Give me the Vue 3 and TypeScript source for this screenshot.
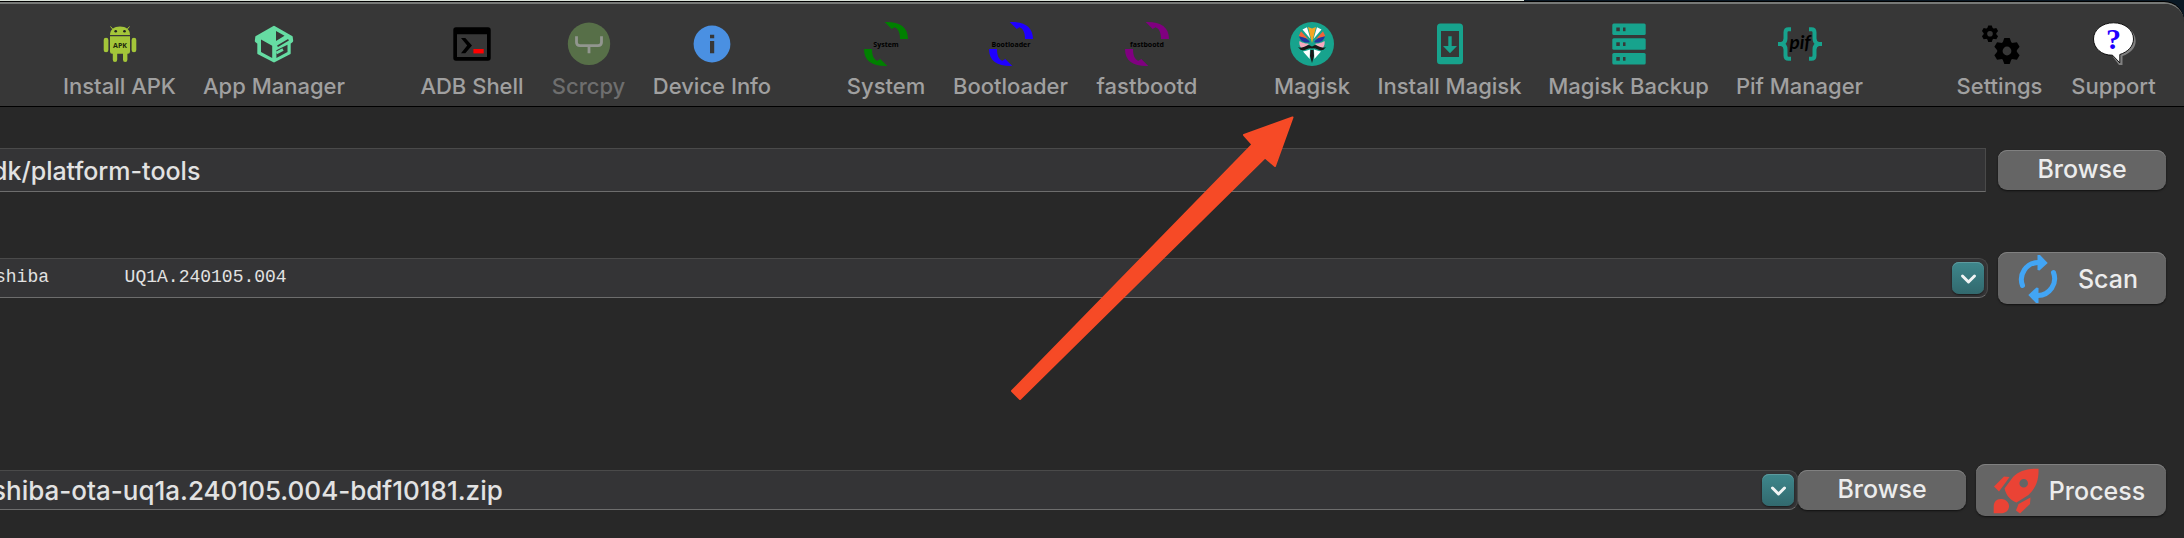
<script setup lang="ts">
import { ref } from 'vue'

interface Tool {
  id: string
  label: string
  disabled?: boolean
}

const groups: Tool[][] = [
  [
    { id: 'apk', label: 'Install APK' },
    { id: 'apps', label: 'App Manager' },
  ],
  [
    { id: 'shell', label: 'ADB Shell' },
    { id: 'scrcpy', label: 'Scrcpy', disabled: true },
    { id: 'info', label: 'Device Info' },
  ],
  [
    { id: 'system', label: 'System' },
    { id: 'bootloader', label: 'Bootloader' },
    { id: 'fastbootd', label: 'fastbootd' },
  ],
  [
    { id: 'magisk', label: 'Magisk' },
    { id: 'install-magisk', label: 'Install Magisk' },
    { id: 'backup', label: 'Magisk Backup' },
    { id: 'pif', label: 'Pif Manager' },
  ],
  [
    { id: 'settings', label: 'Settings' },
    { id: 'support', label: 'Support' },
  ],
]

const rebootColors: Record<string, string> = {
  system: '#008000',
  bootloader: '#1f00ff',
  fastbootd: '#800080',
}

const toolsPath = ref('dk/platform-tools')
const devices = ['shiba\u00a0\u00a0\u00a0\u00a0\u00a0\u00a0\u00a0UQ1A.240105.004']
const device = ref(devices[0])
const firmwares = ['shiba-ota-uq1a.240105.004-bdf10181.zip']
const firmware = ref(firmwares[0])
</script>

<template>
  <div class="desktop">
    <div class="window">
      <nav class="toolbar" aria-label="Tools">
        <template v-for="(group, g) in groups" :key="g">
          <span class="spacer"></span>
          <button v-for="tool in group" :key="tool.id" type="button" class="tool" :disabled="tool.disabled">
            <svg class="tool-icon" viewBox="0 0 44 44" aria-hidden="true">
              <g v-if="tool.id === 'apk'" fill="#a4c639">
                <path d="M12 13C12 7.5 16 4.5 22 4.5S32 7.5 32 13Z" />
                <path d="M12.5 4.5L15.5 8M31.5 4.5L28.5 8" stroke="#a4c639" stroke-width="1" />
                <path d="M12 14.3H32V29.5Q32 31.7 30 31.7H29.4V37.8A2.2 2.2 0 0 1 25 37.8V31.7H19.2V37.8A2.2 2.2 0 0 1 14.8 37.8V31.7H14Q12 31.7 12 29.5Z" />
                <rect x="5.7" y="15.7" width="4.7" height="14.6" rx="2.3" />
                <rect x="33.6" y="15.7" width="4.7" height="14.6" rx="2.3" />
                <circle cx="17.7" cy="9.3" r="1.3" fill="#222" />
                <circle cx="26.5" cy="9.3" r="1.3" fill="#222" />
                <text x="22" y="26.4" class="mini" font-size="7" fill="#20260c">APK</text>
              </g>
              <g v-else-if="tool.id === 'apps'" stroke-linejoin="round">
                <path d="M22 5L39.5 15L40 19L37.5 21V31.2L22 39.2L6.5 31.2V21L4 19L4.5 15Z" fill="#66dca3" stroke="#66dca3" stroke-width="2.4" />
                <path d="M9 17.5L20.2 23.8V36L9 30Z M24 9L32.5 13.8L24 19Z M24.4 28.3L35.5 22.8V30L24.4 36Z" fill="#373737" />
                <path d="M25.5 24.3L36.5 17.8" stroke="#373737" stroke-width="1.6" />
                <path d="M24.4 31L31 27.5" stroke="#66dca3" stroke-width="2.6" />
              </g>
              <g v-else-if="tool.id === 'shell'">
                <path fill-rule="evenodd" d="M6 5.3H38Q40.7 5.3 40.7 8V36Q40.7 38.7 38 38.7H6Q3.3 38.7 3.3 36V8Q3.3 5.3 6 5.3ZM7 12.3V35H37V12.3Z" />
                <path d="M11 16H15.3L22 23.6L15.3 31.2H11L17.2 23.6Z" />
                <rect x="23.4" y="27" width="10.3" height="4.4" fill="#f00" />
              </g>
              <g v-else-if="tool.id === 'scrcpy'">
                <circle cx="22" cy="21.8" r="21.2" fill="#576f48" />
                <path d="M9.5 14.3V20.2Q9.5 23.6 13 23.6H31Q34.5 23.6 34.5 20.2V14.3M22 23.6V31.3" fill="none" stroke="#92968f" stroke-width="2.8" />
              </g>
              <g v-else-if="tool.id === 'info'">
                <circle cx="22" cy="22" r="18.4" fill="#4a90e2" />
                <path d="M20 12.7H24.2V16.3H20ZM20 19H24.2V31.3H20Z" fill="#373737" />
              </g>
              <g v-else-if="rebootColors[tool.id]" :fill="rebootColors[tool.id]">
                <path d="M20.7 0C35-.5 44 4.5 44 17H36C36 11 34.5 6.5 30.5 5.2L27.7 7Z" />
                <path d="M20.7 0C35-.5 44 4.5 44 17H36C36 11 34.5 6.5 30.5 5.2L27.7 7Z" transform="rotate(180 22 22)" />
                <text x="22" y="24.5" class="mini" font-size="7" fill="#000">{{ tool.label }}</text>
              </g>
              <g v-else-if="tool.id === 'magisk'">
                <circle cx="22" cy="22" r="22" fill="#17a38d" />
                <g v-for="flip in [false, true]" :key="String(flip)" :transform="flip ? 'translate(44 0) scale(-1 1)' : undefined">
                  <path d="M18 5L22 6.5V21L20.5 15Z" fill="#f5a623" />
                  <path d="M12.5 7.5L17 5.2L20.5 17Z" fill="#fff" />
                  <path d="M9 13.5L11 9.3L18 17L9.5 14.5Z" fill="#f4623a" />
                  <path d="M9 14.5C14 15 18.5 17 19.8 20.3C15 21 11 20 9 14.5Z" fill="#20349c" />
                  <path d="M9.5 19C13 21.5 17 21.3 19 22L16 24.5L11.5 26.2C9.5 24 9 21.5 9.5 19Z" fill="#f7a8be" />
                  <path d="M8 25C12 27.5 16 23 19 23L22 24.5V26.5C18 25 15 29.5 10.5 27.8Z" fill="#171717" />
                  <path d="M13 29.5C16 29 18 28 20 27.5L19.7 37Z" fill="#fff" />
                  <path d="M22 28L20.5 28L20 34L22 41Z" fill="#171717" />
                </g>
              </g>
              <g v-else-if="tool.id === 'install-magisk'" fill="#17a38d">
                <path fill-rule="evenodd" d="M12.5 1.5H31.5Q35 1.5 35 5V39Q35 42.3 31.5 42.3H12.5Q9 42.3 9 39V5Q9 1.5 12.5 1.5ZM13 9V35H31V9Z" />
                <path d="M20.3 14.3H23.7V24H29L22 31.2L15 24H20.3Z" />
              </g>
              <g v-else-if="tool.id === 'backup'">
                <g v-for="y in [1.5, 16.3, 31]" :key="y">
                  <rect x="5.3" :y="y" width="33.4" height="11.4" rx="1.5" fill="#17a38d" />
                  <rect x="9.3" :y="y + 4" width="3.5" height="3.7" fill="#373737" />
                  <rect x="16" :y="y + 4" width="2.5" height="3.7" fill="#373737" />
                </g>
              </g>
              <g v-else-if="tool.id === 'pif'">
                <path d="M13 7.2H10.5Q7.5 7.2 7.5 10.5V16.5Q7.5 21 3.5 22H0H3.5Q7.5 23 7.5 27.5V33.5Q7.5 36.8 10.5 36.8H13M31 7.2H33.5Q36.5 7.2 36.5 10.5V16.5Q36.5 21 40.5 22H44H40.5Q36.5 23 36.5 27.5V33.5Q36.5 36.8 33.5 36.8H31" fill="none" stroke="#17a38d" stroke-width="4" />
                <text x="22" y="27" class="pif" font-size="19">pif</text>
              </g>
              <g v-else-if="tool.id === 'settings'">
                <g v-for="gear in ['translate(12 11.7) scale(.64)', 'translate(29 29)']" :key="gear" :transform="gear">
                  <circle r="9.7" />
                  <path v-for="a in [0, 60, 120]" :key="a" d="M-2.7-13H2.7L4.5-8V8L2.7 13H-2.7L-4.5 8V-8Z" :transform="`rotate(${a})`" />
                  <circle r="4.4" fill="#373737" />
                </g>
              </g>
              <g v-else>
                <path d="M23.5 2.5C35 2.5 43.7 9.5 43.7 19C43.7 26 38 31.5 30.5 34V43H27L21 35Z" fill="#808080" />
                <path d="M21.5 .8C33 .8 41.5 8 41.5 17C41.5 24 36 30 27.8 32.5V40.8L20.5 33.2C9.5 33.5 1.5 26 1.5 17C1.5 8 10 .8 21.5 .8Z" fill="#fff" stroke="#000" stroke-width=".9" />
                <text x="21.5" y="27" class="question" font-size="30" fill="#1f00ff">?</text>
              </g>
            </svg>
            <span class="tool-label">{{ tool.label }}</span>
          </button>
        </template>
      </nav>

      <main class="content">
        <div class="row">
          <input v-model="toolsPath" class="field path" type="text" aria-label="Platform tools path" />
          <button type="button" class="push">Browse</button>
        </div>

        <div class="row">
          <div class="combo">
            <select v-model="device" class="field mono" aria-label="Device">
              <option v-for="d in devices" :key="d" :value="d">{{ d }}</option>
            </select>
            <span class="chevron">
              <svg viewBox="0 0 32 32" aria-hidden="true"><path d="M10.5 14L16.5 20L22.5 14" /></svg>
            </span>
          </div>
          <button type="button" class="push tall scan">
            <svg class="scan-icon" viewBox="0 0 40 50" aria-hidden="true">
              <path d="M4.5 31.5A17 17 0 0 1 20 8.5M35.5 18.5A17 17 0 0 1 20 41.5" fill="none" stroke="#42a5f5" stroke-width="5" stroke-linecap="round" />
              <path d="M19.5 1H22L29.7 9L21.5 16.5L19.5 16ZM20.5 49H18L10.3 41L18.5 33.5L20.5 34Z" fill="#42a5f5" />
            </svg>
            <span>Scan</span>
          </button>
        </div>

        <div class="row firmware">
          <div class="combo flush">
            <select v-model="firmware" class="field package" aria-label="Firmware package">
              <option v-for="f in firmwares" :key="f" :value="f">{{ f }}</option>
            </select>
            <span class="chevron">
              <svg viewBox="0 0 32 32" aria-hidden="true"><path d="M10.5 14L16.5 20L22.5 14" /></svg>
            </span>
          </div>
          <button type="button" class="push">Browse</button>
          <button type="button" class="push tall process">
            <svg class="rocket" viewBox="0 0 46 46" aria-hidden="true" fill="#ea4335">
              <path fill-rule="evenodd" d="M45.5 .7C34 .4 26 3 20 9L11.5 20.5C13 27 17 32 23.5 34.5L35.5 27C43 20 46 12 45.5 .7ZM30.7 11A4.3 4.3 0 1 0 30.7 19.6A4.3 4.3 0 1 0 30.7 11Z" />
              <path d="M11 8.5L16.5 9L13 14L6 23.5L1 18.5Z" />
              <path d="M37.5 29.5L37 36L27 45.5L23 42.5L25.5 36Z" />
              <path d="M.7 45.3V38.5C.7 33.5 4 30.5 8.5 31C13.5 31.5 16.5 35 16 39C15.5 43 12 45.3 7.5 45.3Z" />
            </svg>
            <span>Process</span>
          </button>
        </div>
      </main>

      <svg class="pointer" viewBox="0 0 288 290" aria-hidden="true">
        <path d="M284.5 4.5L236 22L244.5 31.5L4 278L12 286L257 44.5L267 53Z" />
      </svg>
    </div>
  </div>
</template>

<style>
body {
  margin: 0;
  background: #282828;
}
</style>

<style scoped>
.desktop {
  font-family: Inter, "Liberation Sans", sans-serif;
  background: linear-gradient(90deg, #dbe3da 69.8%, #0a1824 69.8%);
  padding-top: 2px;
}

.window {
  position: relative;
  background: #282828;
  border-top: 2px solid #777977;
  border-top-right-radius: 20px;
  box-shadow: 0 -1px 0 #000;
  overflow: hidden;
}

.toolbar {
  display: grid;
  grid-template-columns:
    49fr 141fr 168fr
    48fr 132fr 101fr 146fr
    48fr 106fr 143fr 130fr
    48fr 104fr 171fr 187fr 155fr
    65fr 115fr 113fr 14fr;
  padding: 18px 0 7px;
  background: #373737;
  border-bottom: 1px solid #000;
}

.tool {
  display: flex;
  flex-direction: column;
  align-items: center;
  gap: 7px;
  min-width: 0;
  padding: 0;
  border: 0;
  background: none;
  color: #a0a0a0;
  font: inherit;
}

.tool:disabled {
  color: #6e6e6e;
}

.tool-icon {
  width: 44px;
  height: 44px;
  overflow: visible;
}

.tool-label {
  font-size: 22px;
  font-weight: 500;
  line-height: 26px;
  white-space: nowrap;
}

.mini {
  font-family: "Open Sans", sans-serif;
  font-weight: 700;
  text-anchor: middle;
}

.pif {
  font-family: Lato, sans-serif;
  font-style: italic;
  font-weight: 700;
  text-anchor: middle;
}

.question {
  font-family: "Liberation Serif", serif;
  font-weight: 700;
  text-anchor: middle;
}

.content {
  display: flex;
  flex-direction: column;
  gap: 60px;
  padding: 41px 18px 22px 0;
}

.row {
  display: flex;
  align-items: center;
  gap: 10px;
}

.firmware {
  margin-top: 100px;
}

.field {
  box-sizing: border-box;
  width: 100%;
  height: 40px;
  margin: 0;
  padding: 2px 0 0;
  appearance: none;
  color: #e2e2e2;
  background: #343436;
  border: 1px solid #4a4a4a;
  border-bottom-color: #6d6d6d;
  border-left: 0;
  border-radius: 0 9px 9px 0;
  font: 500 25px/36px Inter, "Liberation Sans", sans-serif;
  text-indent: -8px;
  outline: none;
}

.path {
  flex: 1;
  width: auto;
  height: 44px;
  margin-right: 2px;
  border-radius: 0;
}

.package {
  font-size: 26px;
}

.mono {
  padding: 0 0 2px;
  font: 18px/36px "Liberation Mono", monospace;
  text-indent: -5px;
}

.combo {
  position: relative;
  flex: 1;
  display: flex;
}

.flush {
  margin-right: -10px;
}

.chevron {
  position: absolute;
  top: 4px;
  right: 4px;
  width: 32px;
  height: 32px;
  border-radius: 7px;
  background: linear-gradient(#3e878c, #32696e);
  box-shadow: inset 0 1px 0 #5d9a9e, 0 1px 2px #0008;
  pointer-events: none;
}

.chevron svg {
  display: block;
  fill: none;
  stroke: #f0f4f4;
  stroke-width: 3;
  stroke-linecap: round;
  stroke-linejoin: round;
}

.push {
  display: flex;
  align-items: center;
  justify-content: center;
  width: 168px;
  height: 40px;
  padding: 0 0 2px;
  border: 0;
  border-radius: 9px;
  background: #656565;
  box-shadow: inset 0 1px 0 #808080, 0 1px 2px #0009;
  color: #ececec;
  font: 500 25px/32px Inter, "Liberation Sans", sans-serif;
}

.tall {
  height: 52px;
  padding: 2px 4px 0 0;
}

.scan {
  gap: 20px;
  padding-right: 8px;
}

.scan-icon {
  width: 40px;
  height: 50px;
}

.process {
  width: 190px;
  gap: 10px;
}

.rocket {
  width: 46px;
  height: 46px;
}

.pointer {
  position: absolute;
  top: 109px;
  left: 46.15%;
  width: 288px;
  height: 290px;
  fill: #f64a26;
  stroke: #f64a26;
  stroke-width: 2;
  stroke-linejoin: round;
  pointer-events: none;
}
</style>
